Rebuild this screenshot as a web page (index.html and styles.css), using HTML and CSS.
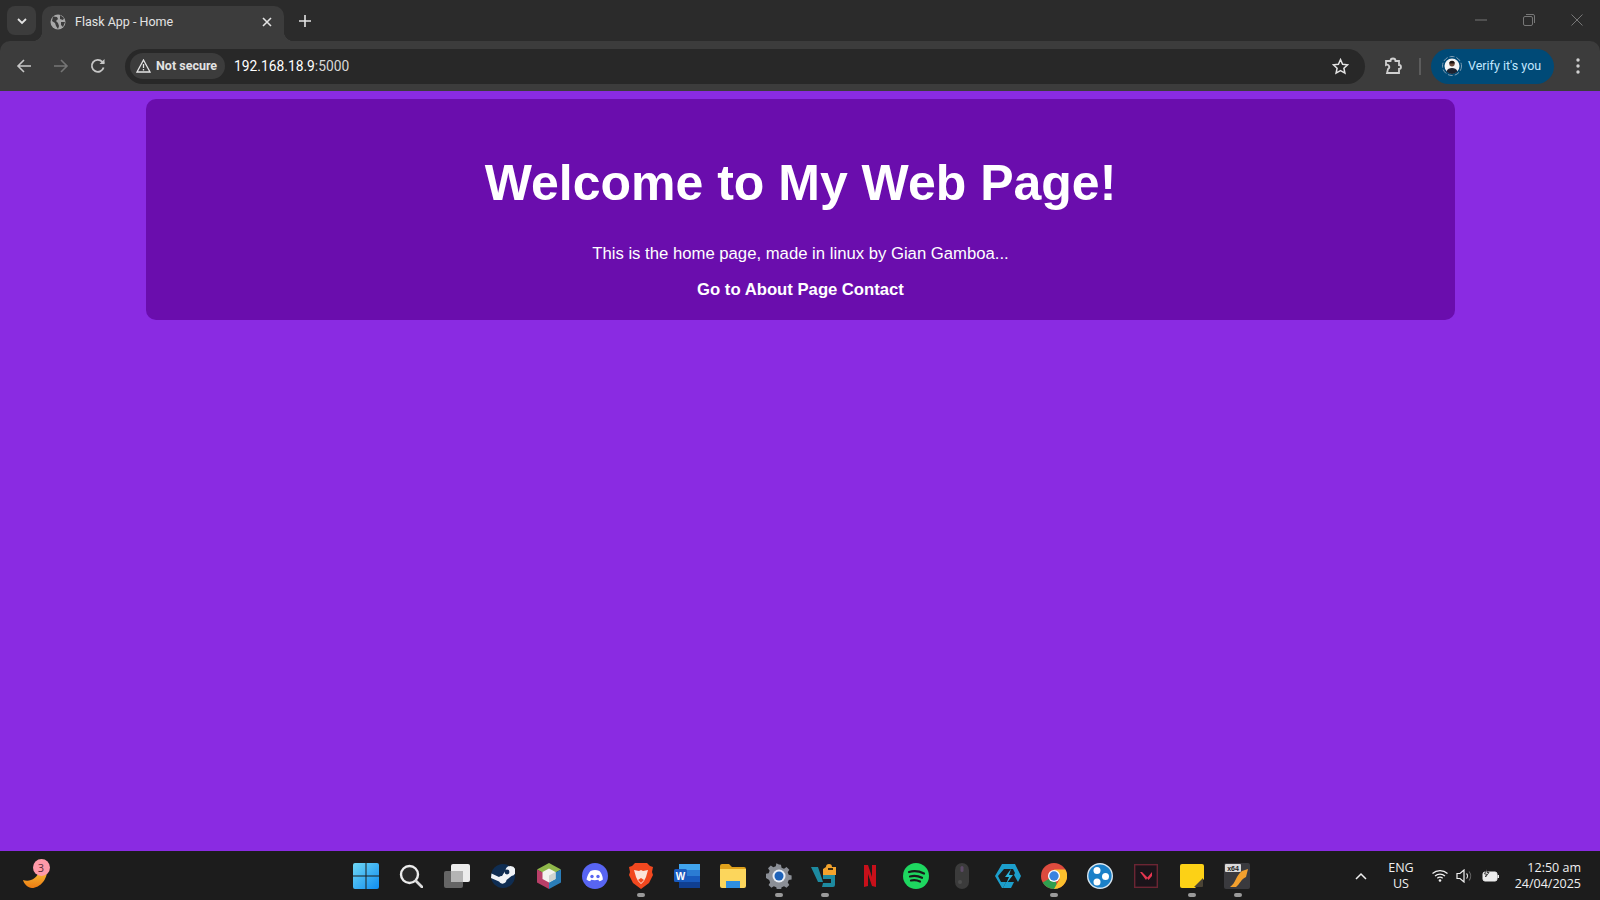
FILE: index.html
```html
<!DOCTYPE html>
<html>
  <head>
    <meta charset="utf-8">
    <meta name="viewport" content="width=device-width, initial-scale=1.0">
    <title>Flask App - Home</title>
    <link rel="stylesheet" href="styles.css">
  </head>
  <body>
    <header class="chrome">
      <div class="tabstrip">
        <button class="tab-search">
          <svg width="12" height="12" viewBox="0 0 12 12"><path d="M2 4l4 4 4-4" fill="none" stroke="#e3e3e3" stroke-width="1.8"/></svg>
        </button>
        <div class="tab">
          <svg class="tab-globe" width="16" height="16" viewBox="0 0 16 16"><circle cx="8" cy="8" r="7.5" fill="#a8a8a8"/><path d="M3 2.500l4 .5 1 2-2 2 2 2 1 3-1 3-2-3-1-3-3-2zM10 1l4 3-1 2-3-1zM11 8l4 0-2 5-2-2z" fill="#3c3c3c"/></svg>
          <span class="tab-title">Flask App - Home</span>
          <svg class="tab-close" width="10" height="10" viewBox="0 0 10 10"><path d="M1 1l8 8M9 1l-8 8" stroke="#e3e3e3" stroke-width="1.6"/></svg>
        </div>
        <svg class="new-tab" width="12" height="12" viewBox="0 0 12 12"><path d="M6 0v12M0 6h12" stroke="#e3e3e3" stroke-width="1.6"/></svg>
        <div class="window-controls">
          <svg width="12" height="12" viewBox="0 0 12 12"><path d="M0 6h12" stroke="#777" stroke-width="1"/></svg>
          <svg width="12" height="12" viewBox="0 0 12 12"><rect x="0.5" y="2.500" width="9" height="9" rx="1.500" fill="none" stroke="#777"/><path d="M3 .5h7a1.500 1.500 0 0 1 1.500 1.500v7" fill="none" stroke="#777"/></svg>
          <svg width="12" height="12" viewBox="0 0 12 12"><path d="M.5.5l11 11M11.500.5l-11 11" stroke="#777" stroke-width="1"/></svg>
        </div>
      </div>
      <div class="toolbar">
        <button class="nav-btn">
          <svg width="16" height="16" viewBox="0 0 16 16"><path d="M15 8H2M8 2L2 8l6 6" fill="none" stroke="#c7c7c7" stroke-width="1.6"/></svg>
        </button>
        <button class="nav-btn">
          <svg width="16" height="16" viewBox="0 0 16 16"><path d="M1 8h13M8 2l6 6-6 6" fill="none" stroke="#757575" stroke-width="1.6"/></svg>
        </button>
        <button class="nav-btn">
          <svg width="16" height="16" viewBox="0 0 16 16"><path d="M13.600 9.500A6 6 0 1 1 12.300 3.800L14 5.500" fill="none" stroke="#c7c7c7" stroke-width="1.8"/><path d="M14.500 1v5h-5z" fill="#c7c7c7"/></svg>
        </button>
        <div class="omnibox">
          <div class="security-chip">
            <svg width="15" height="14" viewBox="0 0 15 14"><path d="M7.500 1L14 13H1z" fill="none" stroke="#e3e3e3" stroke-width="1.300"/><path d="M7.500 5v4M7.500 10v1.500" stroke="#e3e3e3" stroke-width="1.300"/></svg>
            <span class="chip-label">Not secure</span>
          </div>
          <span class="url">192.168.18.9<span class="url-port">:5000</span></span>
          <svg class="star" width="17" height="17" viewBox="0 0 17 17"><path d="M8.500 1.600l2.100 4.600 5 .6-3.700 3.400 1 4.900-4.400-2.500-4.400 2.500 1-4.900L1.400 6.800l5-.6z" fill="none" stroke="#e3e3e3" stroke-width="1.500"/></svg>
        </div>
        <svg class="extensions" width="18" height="18" viewBox="0 0 18 18"><path d="M2 4h4.500a2.500 2.500 0 0 1 5 0H15v4a2 2 0 0 1 0 4v4H3l1-4a2.200 2.200 0 0 0-2-4z" fill="none" stroke="#d0d0d0" stroke-width="1.800"/></svg>
        <span class="toolbar-sep"></span>
        <div class="verify-pill">
          <svg width="20" height="20" viewBox="0 0 20 20"><circle cx="10" cy="10" r="9.500" fill="none" stroke="#7f9db3" stroke-width="1" stroke-dasharray="5 2"/><circle cx="10" cy="10" r="7.500" fill="#f4f4f4"/><circle cx="10" cy="7.800" r="2.700" fill="#6b4a3a"/><path d="M7.300 7.500a2.700 2.700 0 0 1 5.400 0z" fill="#1d1512"/><path d="M4.500 15.500c1-3 3-3.500 5.500-3.500s4.500.5 5.500 3.500a7.500 7.500 0 0 1-11 0z" fill="#1c2230"/></svg>
          <span class="chip-label">Verify it's you</span>
        </div>
        <svg class="menu-dots" width="4" height="16" viewBox="0 0 4 16"><circle cx="2" cy="2" r="1.700" fill="#d0d0d0"/><circle cx="2" cy="8" r="1.700" fill="#d0d0d0"/><circle cx="2" cy="14" r="1.700" fill="#d0d0d0"/></svg>
      </div>
    </header>

    <main class="page">
      <section class="card">
        <h1>Welcome to My Web Page!</h1>
        <p>This is the home page, made in linux by Gian Gamboa...</p>
        <nav class="card-links">
          <a href="#">Go to About Page</a>
          <a href="#">Contact</a>
        </nav>
      </section>
    </main>

    <footer class="taskbar">
      <div class="widget">
        <svg width="30" height="30" viewBox="0 0 30 30">
          <defs><linearGradient id="moon" x1="0" y1="0" x2="0" y2="1"><stop offset="0" stop-color="#f7c23a"/><stop offset="1" stop-color="#ee7c12"/></linearGradient></defs>
          <path d="M3 19C9 21 17 19 20 8L27 8C28 18 20 27 12 27 8 27 4 23 3 19z" fill="url(#moon)"/>
        </svg>
        <span class="widget-badge">3</span>
      </div>
      <div class="task-icons">
        <span class="task-icon"><svg width="26" height="26" viewBox="0 0 26 26"><defs><linearGradient id="win" x1="0" y1="0" x2="1" y2="1"><stop offset="0" stop-color="#6fd8f5"/><stop offset="1" stop-color="#0f8cf0"/></linearGradient></defs><path d="M0 2a2 2 0 0 1 2-2h10.500v12.500H0zM13.500 0H24a2 2 0 0 1 2 2v10.500H13.500zM0 13.500h12.500V26H2a2 2 0 0 1-2-2zM13.500 13.500H26V24a2 2 0 0 1-2 2H13.500z" fill="url(#win)"/></svg></span>
        <span class="task-icon"><svg width="24" height="24" viewBox="0 0 24 24"><circle cx="10.500" cy="10.500" r="8.500" fill="#2a2a2a" stroke="#ececec" stroke-width="2.400"/><path d="M17 17l6 6" stroke="#dcdcdc" stroke-width="2.800" stroke-linecap="round"/></svg></span>
        <span class="task-icon"><svg width="26" height="26" viewBox="0 0 26 26"><rect x="7" y="1" width="19" height="18" rx="2" fill="#ececec"/><rect x="0" y="8" width="19" height="17" rx="2" fill="#6b6b6b" opacity=".92"/><rect x="7" y="8" width="12" height="11" fill="#b4b4b4"/></svg></span>
        <span class="task-icon"><svg width="24" height="24" viewBox="0 0 24 24"><circle cx="12" cy="12" r="12" fill="#0f2d52"/><path d="M0 14l8 3.500a4 4 0 0 0 7.500-1.500l5-4a5 5 0 1 0-6-5.500L11 12a4 4 0 0 0-3 1L.5 9.500z" fill="#f0f3f7"/><circle cx="16" cy="8" r="2.400" fill="#0f2d52"/></svg></span>
        <span class="task-icon"><svg width="24" height="26" viewBox="0 0 24 26"><path d="M12 0l12 6.500L12 13 0 6.500z" fill="#8fb84a"/><path d="M0 6.500L12 13v13L0 19.500z" fill="#b93f68"/><path d="M24 6.500V19.500L12 26V13z" fill="#2a7db8"/><path d="M12 5.500l6.500 3.500v7L12 19.500 5.500 16V9z" fill="#f2f2ee"/><path d="M12 12.500l6.500-3.500v7L12 19.500z" fill="#cfd3cf"/></svg></span>
        <span class="task-icon"><svg width="26" height="26" viewBox="0 0 26 26"><circle cx="13" cy="13" r="13" fill="#5865f2"/><path d="M8.500 8c3-1.200 6-1.200 9 0 2 2.200 3.200 5 3.400 8.500-1.200 1-2.500 1.500-3.700 1.800l-.9-1.500c-2.400.6-4.800.6-7.200 0l-.9 1.500c-1.200-.3-2.500-.8-3.700-1.800C5.300 13 6.500 10.200 8.500 8z" fill="#fff"/><circle cx="10" cy="13.500" r="1.700" fill="#5865f2"/><circle cx="16" cy="13.500" r="1.700" fill="#5865f2"/></svg></span>
        <span class="task-icon running"><svg width="24" height="26" viewBox="0 0 24 26"><path d="M6 0h12l3 3 3 1-1 5 1 3-4 8-8 6-8-6-4-8 1-3-1-5 3-1z" fill="#f1481f"/><path d="M5 7l5 1 2-1 2 1 5-1-2 7-2 4-3 3-3-3-2-4z" fill="#fbe4da"/><path d="M9 17l3-2 3 2-3 3z" fill="#f1481f"/></svg></span>
        <span class="task-icon"><svg width="26" height="24" viewBox="0 0 26 24"><rect x="5" y="0" width="21" height="24" rx="2" fill="#2b7cd3"/><rect x="5" y="0" width="21" height="6" fill="#41a5ee"/><rect x="5" y="12" width="21" height="6" fill="#185abd"/><rect x="5" y="18" width="21" height="6" fill="#103f91"/><rect x="0" y="5" width="13" height="13" rx="1.500" fill="#185abd"/><text x="6.500" y="15.500" class="word-letter">W</text></svg></span>
        <span class="task-icon"><svg width="26" height="24" viewBox="0 0 26 24"><path d="M0 2a2 2 0 0 1 2-2h7l3 3h12a2 2 0 0 1 2 2v5H0z" fill="#e0a11b"/><path d="M0 5h26v17a2 2 0 0 1-2 2H2a2 2 0 0 1-2-2z" fill="#fcd65c"/><path d="M6 17h14v7H6z" fill="#2f8fe0"/></svg></span>
        <span class="task-icon running"><svg width="26" height="26" viewBox="0 0 26 26"><path d="M13 0l2.300.3.700 3.300 2.800 1.100 2.800-1.800 3.200 3.200-1.800 2.800 1.100 2.800 3.300.7v4.600l-3.300.7-1.100 2.800 1.800 2.800-3.200 3.200-2.800-1.800-2.800 1.100-.7 3.300h-4.600l-.7-3.300-2.800-1.100-2.800 1.800-3.200-3.200 1.800-2.800-1.100-2.800L-2 15.300v-4.600l3.300-.7 1.100-2.800L.6 4.400 3.800 1.200l2.800 1.800 2.800-1.100.7-3.300z" fill="#8b8f96" transform="translate(1.500 1.500) scale(.88)"/><circle cx="13" cy="13" r="6.500" fill="#e8eef6"/><circle cx="13" cy="13" r="4.500" fill="#1d62b8"/></svg></span>
        <span class="task-icon running"><svg width="26" height="26" viewBox="0 0 26 26"><path d="M0 4h7l5 15h-5z" fill="#1d8aa0"/><path d="M12 12h12v10a2 2 0 0 1-2 2H11l1-4h8v-4h-8z" fill="#1d8aa0"/><path d="M15 4a3 3 0 0 1 6 0h4v8H12V6z" fill="#f2a22c"/><rect x="17" y="5" width="5" height="2" fill="#3a2a12"/></svg></span>
        <span class="task-icon"><svg width="12" height="22" viewBox="0 0 12 22"><path d="M0 0h4l4 12V0h4v22l-4-1L4 9v12l-4 1z" fill="#c8101a"/></svg></span>
        <span class="task-icon"><svg width="26" height="26" viewBox="0 0 26 26"><circle cx="13" cy="13" r="13" fill="#1ed760"/><path d="M6 9c5-1.500 10-1 15 1.500M7 13.500c4-1 8-.7 12 1.300M8 17.500c3-.7 6-.5 9 1" fill="none" stroke="#1a1a1a" stroke-width="2.200" stroke-linecap="round"/></svg></span>
        <span class="task-icon"><svg width="14" height="26" viewBox="0 0 14 26"><rect x="0" y="0" width="14" height="26" rx="7" fill="#3b3b3b"/><rect x="5.500" y="3" width="3" height="6" rx="1.500" fill="#5c4a66"/><circle cx="5" cy="19" r="2" fill="#4d4d4d"/></svg></span>
        <span class="task-icon"><svg width="26" height="24" viewBox="0 0 26 24"><path d="M7 0h13l6 12-3 6-4-7 1-2-2-4H9L3 12l3 6h5l-3 6H7L0 12z" fill="#1c9ecb"/><path d="M16 5l-6 8h4l-3 7 7-9h-4z" fill="#2bb6de"/><path d="M11 18h8l-3 6H8z" fill="#1c9ecb"/></svg></span>
        <span class="task-icon running"><svg width="26" height="26" viewBox="0 0 26 26"><circle cx="13" cy="13" r="13" fill="#dd4b3e"/><path d="M13 13L1.700 19.500A13 13 0 0 0 13 26a13 13 0 0 0 4-0.600z" fill="#2f9e4f"/><path d="M13 6.500h11.300A13 13 0 0 1 13 26l5.600-9.800z" fill="#fbc02d"/><circle cx="13" cy="13" r="6" fill="#fff"/><circle cx="13" cy="13" r="4.700" fill="#3b82e0"/></svg></span>
        <span class="task-icon"><svg width="26" height="26" viewBox="0 0 26 26"><circle cx="13" cy="13" r="12.300" fill="#1a80c8" stroke="#d6e4ee" stroke-width="1.400"/><circle cx="10" cy="7.500" r="3.500" fill="#fff"/><circle cx="18.500" cy="13.500" r="3.500" fill="#fff"/><circle cx="10" cy="19" r="3.500" fill="#fff"/></svg></span>
        <span class="task-icon"><svg width="24" height="24" viewBox="0 0 24 24"><rect x=".7" y=".7" width="22.600" height="22.600" fill="#1b141a" stroke="#6b2533" stroke-width="1.400"/><path d="M6 8l6 8 1.500-2.500L8 8zM18 8l-5 6 1.500 2 3.500-4z" fill="#e5364f"/></svg></span>
        <span class="task-icon running"><svg width="24" height="24" viewBox="0 0 24 24"><path d="M2 0h20a2 2 0 0 1 2 2v13l-9 9H2a2 2 0 0 1-2-2V2a2 2 0 0 1 2-2z" fill="#fcd116"/><path d="M23 14v8a1 1 0 0 1-1 1h-8z" fill="#4a4335"/></svg></span>
        <span class="task-icon running"><svg width="26" height="26" viewBox="0 0 26 26"><rect width="26" height="26" rx="2" fill="#3a3a3e"/><path d="M6 24c6-4 6-12 12-16l6-2-2 8c-5 2-6 7-10 10z" fill="#f2a02e"/><rect x="1" y="1" width="16" height="8" rx="1" fill="#d9d9d9"/><text x="9" y="7.800" class="x64-label">x64</text></svg></span>
      </div>
      <div class="tray">
        <svg class="tray-chevron" width="12" height="8" viewBox="0 0 12 8"><path d="M1 7l5-5 5 5" fill="none" stroke="#f0f0f0" stroke-width="1.500"/></svg>
        <div class="tray-lang"><span>ENG</span><span>US</span></div>
        <div class="tray-status">
          <svg width="16" height="13" viewBox="0 0 16 13"><path d="M.5 4.500a11 11 0 0 1 15 0M3 7a7.500 7.500 0 0 1 10 0M5.300 9.300a4 4 0 0 1 5.400 0" fill="none" stroke="#f0f0f0" stroke-width="1.200"/><circle cx="8" cy="11.500" r="1.300" fill="#f0f0f0"/></svg>
          <svg width="18" height="14" viewBox="0 0 18 14"><path d="M1 4.500h3L8 1v12L4 9.500H1z" fill="none" stroke="#f0f0f0" stroke-width="1.200"/><path d="M10.500 4.500a3.500 3.500 0 0 1 0 5" fill="none" stroke="#ddd" stroke-width="1.100"/><path d="M13 2.500a7 7 0 0 1 0 9" fill="none" stroke="#666" stroke-width="1.100"/></svg>
          <svg width="18" height="14" viewBox="0 0 18 14"><rect x="1" y="3" width="14" height="9" rx="2" fill="#ececec" stroke="#ececec"/><rect x="15.500" y="6" width="1.500" height="3" fill="#ececec"/><path d="M5 0L2.500 5h2L3.500 8 7 3.500H5z" fill="#ececec" stroke="#1c1c1c" stroke-width=".8"/></svg>
        </div>
        <div class="tray-clock"><span>12:50 am</span><span>24/04/2025</span></div>
      </div>
    </footer>
  </body>
</html>
```

FILE: styles.css
```css
html, body {
  width: 100%;
  height: 100%;
  margin: 0;
  padding: 0;
  overflow: hidden;
}
body {
  display: flex;
  flex-direction: column;
  background-color: #8a2be2;
  font-family: "Liberation Sans", arial, sans-serif;
}
button {
  background: unset;
  border: 0;
  padding: 0;
  display: flex;
  align-items: center;
  justify-content: center;
}

/* browser chrome */
.chrome {
  flex: none;
  background-color: #2b2b2b;
  font-family: "Roboto", "Noto Sans", sans-serif;
}
.tabstrip {
  height: 41px;
  box-sizing: border-box;
  padding: 6px 0 0 7px;
  display: flex;
  align-items: flex-start;
}
.tab-search {
  width: 29px;
  height: 29px;
  border-radius: 8px;
  background-color: #3c3c3c;
}
.tab {
  position: relative;
  width: 242px;
  height: 35px;
  margin-left: 6px;
  box-sizing: border-box;
  padding: 0 12px 4px 8px;
  display: flex;
  align-items: center;
  background-color: #3c3c3c;
  border-radius: 10px 10px 0 0;
}
.tab::before,
.tab::after {
  content: "";
  position: absolute;
  bottom: 0;
  width: 10px;
  height: 10px;
}
.tab::before {
  left: -10px;
  background: radial-gradient(circle at 0 0, transparent 10px, #3c3c3c 10.5px);
}
.tab::after {
  right: -10px;
  background: radial-gradient(circle at 100% 0, transparent 10px, #3c3c3c 10.5px);
}
.tab-title {
  flex: 1;
  margin-left: 9px;
  font-size: 12.5px;
  color: #e3e3e3;
}
.new-tab {
  margin: 9px 0 0 15px;
}
.window-controls {
  margin-left: auto;
  padding: 8px 17px 0 0;
  display: flex;
  gap: 36px;
}
.toolbar {
  height: 50px;
  display: flex;
  align-items: center;
  padding-left: 5px;
  background-color: #3c3c3c;
  border-radius: 10px 10px 0 0;
}
.nav-btn {
  width: 37px;
  height: 36px;
}
.omnibox {
  width: 1240px;
  height: 35px;
  margin-left: 9px;
  box-sizing: border-box;
  padding: 0 16px 0 5px;
  display: flex;
  align-items: center;
  background-color: #282828;
  border-radius: 18px;
}
.security-chip {
  height: 26px;
  padding: 0 8px 0 6px;
  display: flex;
  align-items: center;
  gap: 5px;
  background-color: #3c3c3c;
  border-radius: 13px;
  font-size: 12.5px;
  font-weight: 700;
  color: #e3e3e3;
}
.chip-label {
  padding-bottom: 2px;
}
.url {
  margin-left: 9px;
  font-size: 13.8px;
  color: #fff;
}
.url-port {
  color: #d8d8d8;
}
.star {
  margin-left: auto;
}
.extensions {
  margin-left: 19px;
}
.toolbar-sep {
  width: 2px;
  height: 17px;
  margin-left: 17px;
  background-color: #5c5c5c;
}
.verify-pill {
  width: 123px;
  height: 35px;
  margin-left: 10px;
  box-sizing: border-box;
  padding-left: 11px;
  display: flex;
  align-items: center;
  gap: 6px;
  background-color: #004a77;
  border-radius: 18px;
  font-size: 12.5px;
  color: #c2e7ff;
}
.menu-dots {
  margin-left: 22px;
}

/* flask page */
.page {
  flex: 1;
  padding: 8px 145px 0 146px;
  color: #fff;
  text-align: center;
}
.card {
  height: 221px;
  box-sizing: border-box;
  padding-top: 24px;
  background-color: #6a0dad;
  border-radius: 10px;
}
h1 {
  margin: 31px 0 32px;
  font-size: 50px;
  font-weight: 700;
}
p {
  margin: 0 0 16px;
  font-size: 16.7px;
}
.card-links a {
  color: #fff;
  font-size: 16.7px;
  font-weight: 700;
  text-decoration: none;
}

/* windows taskbar */
.taskbar {
  flex: none;
  height: 49px;
  display: grid;
  grid-template-columns: 1fr auto 1fr;
  align-items: center;
  background-color: #1c1c1c;
  color: #f0f0f0;
  font-family: "Open Sans", "Noto Sans", sans-serif;
  font-size: 12.5px;
}
.widget {
  position: relative;
  width: 30px;
  height: 30px;
  margin-left: 20px;
}
.widget-badge {
  position: absolute;
  top: -1.5px;
  left: 12.5px;
  width: 17px;
  height: 17px;
  border-radius: 50%;
  background-color: #ff9aa8;
  color: #5a2a35;
  font-size: 11px;
  line-height: 17px;
  text-align: center;
}
.task-icons {
  display: flex;
  margin-left: 3px;
}
.task-icon {
  position: relative;
  width: 45.9px;
  height: 40px;
  display: flex;
  align-items: center;
  justify-content: center;
}
.task-icon.running::after {
  content: "";
  position: absolute;
  bottom: -1px;
  left: 19px;
  width: 8px;
  height: 4px;
  border-radius: 2px;
  background-color: #9a9a9a;
}
.word-letter {
  font-family: "Liberation Sans", sans-serif;
  font-size: 10px;
  font-weight: 700;
  fill: #fff;
  text-anchor: middle;
}
.x64-label {
  font-family: "Liberation Sans", sans-serif;
  font-size: 7px;
  font-weight: 700;
  fill: #222;
  text-anchor: middle;
}
.tray {
  display: flex;
  align-items: center;
  justify-content: flex-end;
  padding-right: 19px;
}
.tray-lang {
  margin-left: 21px;
  display: flex;
  flex-direction: column;
  align-items: center;
  line-height: 16px;
}
.tray-status {
  margin-left: 18px;
  display: flex;
  align-items: center;
  gap: 8px;
}
.tray-clock {
  margin-left: 15px;
  display: flex;
  flex-direction: column;
  align-items: flex-end;
  line-height: 16px;
}
```
